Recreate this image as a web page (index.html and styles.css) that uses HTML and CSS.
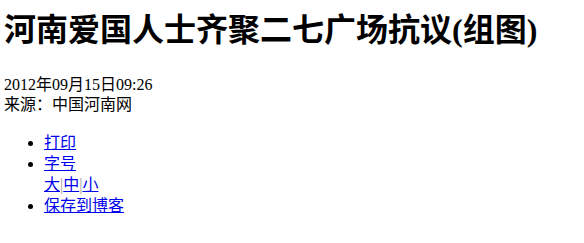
FILE: index.html
```html
<!DOCTYPE html>
<html lang="zh-CN">
<head>
<meta charset="utf-8">
<title>河南爱国人士齐聚二七广场抗议(组图)</title>
<link rel="stylesheet" href="styles.css">
</head>
<body>
<h1 class="title">河南爱国人士齐聚二七广场抗议(组图)</h1>
<div class="meta">2012年09月15日09:26<br>来源：中国河南网</div>
<ul class="tools">
<li><a href="#">打印</a></li>
<li><a href="#">字号</a><br><a href="#">大</a><span class="sep">|</span><a href="#">中</a><span class="sep">|</span><a href="#">小</a></li>
<li><a href="#">保存到博客</a></li>
</ul>
</body>
</html>
```
FILE: styles.css
```css
body {
  margin: 0 4px;
  font-family: "Liberation Serif", "Noto Sans CJK SC", serif;
  font-size: 16px;
  color: #000;
  background: #fff;
}
.title {
  font-size: 32px;
  font-weight: bold;
  line-height: 37px;
  margin: 12px 0 0;
}
.meta {
  margin: 26px 0 0;
  line-height: 20px;
}
.tools {
  margin: 17px 0 0;
  padding-left: 40px;
  line-height: 21px;
}
.tools a {
  color: #0000ee;
}
.sep {
  color: #999;
}
```
